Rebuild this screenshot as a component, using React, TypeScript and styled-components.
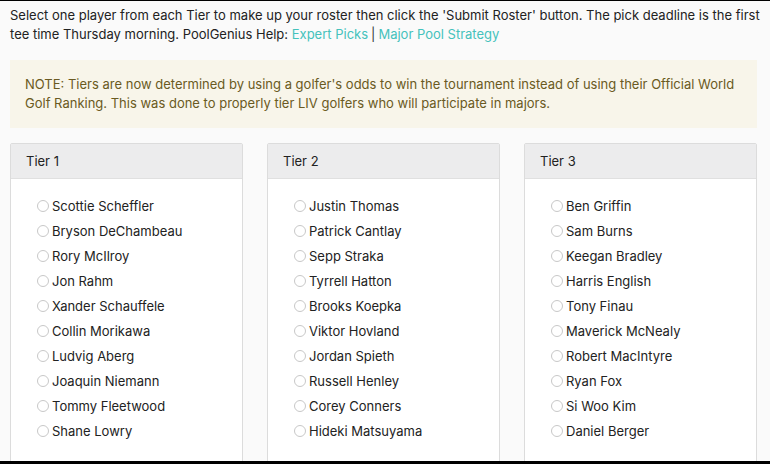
import React from "react";
import styled, { createGlobalStyle } from "styled-components";

const GlobalStyle = createGlobalStyle`
  html {
    background: #000;
  }
  body {
    margin: 0;
    font-family: Inter, "Noto Sans", Arial, sans-serif;
    color: #222;
  }
`;

const Page = styled.div`
  margin-top: 1px;
  height: 460px;
  overflow: hidden;
  background: #fafafa;
  padding: 5px 13px 0 10px;
  box-sizing: border-box;
`;

const Intro = styled.p`
  margin: 0 -6px 0 0;
  font-size: 13px;
  line-height: 19px;
`;

const Link = styled.a`
  color: #45c2bc;
  text-decoration: none;
`;

const Sep = styled.span`
  color: #333;
  padding: 0 3px;
`;

const Note = styled.div`
  margin-top: 16px;
  background: #f8f5ea;
  color: #6a5a22;
  font-size: 13px;
  line-height: 19px;
  padding: 15px 15px;
`;

const Tiers = styled.div`
  margin-top: 15px;
  display: grid;
  grid-template-columns: repeat(3, 233px);
  column-gap: 24px;
`;

const Card = styled.div`
  background: #fff;
  border: 1px solid #dcdcdc;
  border-radius: 2px;
`;

const CardHeader = styled.div`
  height: 34px;
  display: flex;
  align-items: center;
  padding: 0 15px;
  background: #ececed;
  border-bottom: 1px solid #e0e0e0;
  font-size: 13px;
`;

const List = styled.ul`
  list-style: none;
  margin: 0;
  padding: 14px 0 20px 26px;
`;

const Item = styled.li`
  display: flex;
  align-items: center;
  height: 25px;
  font-size: 13px;
`;

const Radio = styled.input.attrs({ type: "radio" })`
  appearance: none;
  width: 12px;
  height: 12px;
  margin: 0 3px 0 0;
  border: 1px solid #c8c8c8;
  border-radius: 50%;
  background: #fff;
  box-sizing: border-box;
`;

const tiers = [
  {
    name: "Tier 1",
    players: [
      "Scottie Scheffler",
      "Bryson DeChambeau",
      "Rory McIlroy",
      "Jon Rahm",
      "Xander Schauffele",
      "Collin Morikawa",
      "Ludvig Aberg",
      "Joaquin Niemann",
      "Tommy Fleetwood",
      "Shane Lowry",
    ],
  },
  {
    name: "Tier 2",
    players: [
      "Justin Thomas",
      "Patrick Cantlay",
      "Sepp Straka",
      "Tyrrell Hatton",
      "Brooks Koepka",
      "Viktor Hovland",
      "Jordan Spieth",
      "Russell Henley",
      "Corey Conners",
      "Hideki Matsuyama",
    ],
  },
  {
    name: "Tier 3",
    players: [
      "Ben Griffin",
      "Sam Burns",
      "Keegan Bradley",
      "Harris English",
      "Tony Finau",
      "Maverick McNealy",
      "Robert MacIntyre",
      "Ryan Fox",
      "Si Woo Kim",
      "Daniel Berger",
    ],
  },
];

export default function App() {
  return (
    <>
      <GlobalStyle />
      <Page>
        <Intro>
          Select one player from each Tier to make up your roster then click the 'Submit Roster'
          button. The pick deadline is the first tee time Thursday morning. PoolGenius Help:{" "}
          <Link href="#">Expert Picks</Link>
          <Sep>|</Sep>
          <Link href="#">Major Pool Strategy</Link>
        </Intro>
        <Note>
          NOTE: Tiers are now determined by using a golfer's odds to win the tournament instead of
          using their Official World Golf Ranking. This was done to properly tier LIV golfers who
          will participate in majors.
        </Note>
        <Tiers>
          {tiers.map((tier) => (
            <Card key={tier.name}>
              <CardHeader>{tier.name}</CardHeader>
              <List>
                {tier.players.map((p) => (
                  <Item key={p}>
                    <Radio name={tier.name} />
                    {p}
                  </Item>
                ))}
              </List>
            </Card>
          ))}
        </Tiers>
      </Page>
    </>
  );
}
